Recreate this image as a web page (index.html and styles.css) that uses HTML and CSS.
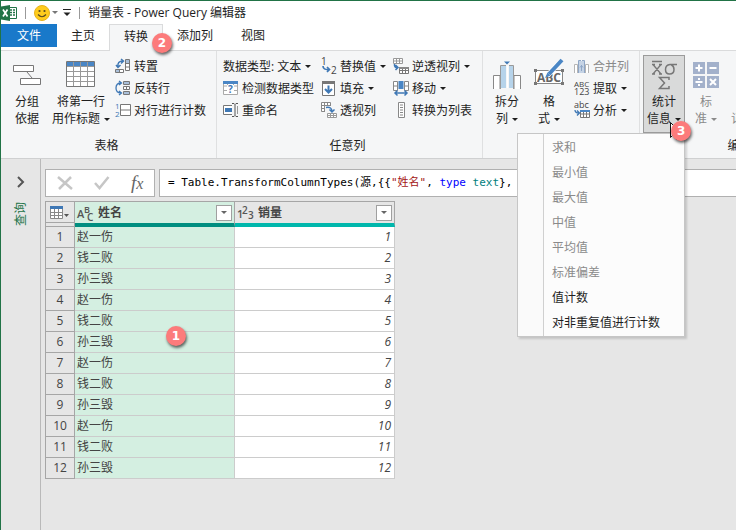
FILE: index.html
```html
<!DOCTYPE html>
<html lang="zh-CN">
<head>
    <meta charset="UTF-8">
    <meta name="viewport" content="width=device-width, initial-scale=1.0">
    <title>销量表 - Power Query 编辑器</title>
    <link rel="stylesheet" href="styles.css">
</head>
<body>
<div class="window">
    <!-- Title bar -->
    <header class="title-bar">
        <svg class="app-icon" width="16" height="16" viewBox="0 0 16 16">
            <path d="M8 2.500H15.500V13.500H8" fill="#fff" stroke="#217346"/>
            <path d="M9 5h2M12 5h2M9 7.500h2M12 7.500h2M9 10h2M12 10h2" stroke="#217346" stroke-width="1.500"/>
            <path d="M0 1.500L9 0V16L0 14.500Z" fill="#217346"/>
            <path d="M2 4.500L6.500 11.500M6.500 4.500L2 11.500" stroke="#fff" stroke-width="1.700"/>
        </svg>
        <span class="divider"></span>
        <button class="smile-button" aria-label="反馈">
            <svg width="16" height="16" viewBox="0 0 16 16">
                <circle cx="8" cy="8" r="7.500" fill="#ffcc1c" stroke="#e8b21a"/>
                <circle cx="5.500" cy="6" r="1.100" fill="#5a4a20"/>
                <circle cx="10.500" cy="6" r="1.100" fill="#5a4a20"/>
                <path d="M4 9.500Q8 14 12 9.500" fill="none" stroke="#5a4a20" stroke-width="1.200"/>
            </svg>
            <i class="arrow grey"></i>
        </button>
        <button class="customize-button" aria-label="自定义">
            <svg width="8" height="8" viewBox="0 0 8 8"><path d="M0 .5H8" stroke="#222"/><path d="M.5 3.500H7.500L4 7Z" fill="#222"/></svg>
        </button>
        <span class="divider"></span>
        <span class="title">销量表 - Power Query 编辑器</span>
    </header>

    <!-- Ribbon tabs -->
    <nav class="tabs">
        <button class="tab file">文件</button>
        <button class="tab">主页</button>
        <button class="tab active">转换<span class="badge badge-tab">2</span></button>
        <button class="tab">添加列</button>
        <button class="tab">视图</button>
    </nav>

    <!-- Ribbon -->
    <section class="ribbon">
        <div class="group">
            <div class="group-body">
                <button class="big">
                    <span class="big-icon">
                        <svg width="30" height="24" viewBox="0 0 30 24">
                            <path d="M15 9L20 15" stroke="#777"/>
                            <path d="M1.500 2.500H21.500V8.500H1.500ZM8.500 15.500H28.500V21.500H8.500Z" fill="#fff" stroke="#777"/>
                        </svg>
                    </span>
                    <span>分组<br>依据</span>
                </button>
                <button class="big">
                    <span class="big-icon">
                        <svg width="30" height="27" viewBox="0 0 30 27">
                            <path d="M.5 .5H28.500V25.500H.5Z" fill="#fff" stroke="#777"/>
                            <path d="M1 1H28V5H1Z" fill="#4a86c5"/>
                            <path d="M7.500 1V25M14.500 1V25M21.500 1V25M1 5.500H28M1 10.500H28M1 15.500H28M1 20.500H28" stroke="#999"/>
                        </svg>
                    </span>
                    <span>将第一行<br>用作标题<i class="arrow"></i></span>
                </button>
                <div class="column">
                    <button class="small">
                        <svg width="16" height="16" viewBox="0 0 16 16">
                            <path d="M.5 11.500H8.500V14.500H.5ZM10.500 1.500H14.500V12.500H10.500Z" fill="#fff" stroke="#777"/>
                            <path d="M11 2H14V5H11ZM1 12H4V14H1Z" fill="#a9bfd9"/>
                            <path d="M10.500 5.500H14.500M10.500 9H14.500M4.500 11.500V14.500" stroke="#777"/>
                            <path d="M3 9Q2 3 8 3M6 1L8.500 3L6 5.500M1 7L3 9.500L5.500 7" fill="none" stroke="#3f78b5" stroke-width="1.500"/>
                        </svg>转置
                    </button>
                    <button class="small">
                        <svg width="16" height="16" viewBox="0 0 16 16">
                            <path d="M8.500 1.500H14.500V4.500H8.500ZM8.500 6.500H14.500V9.500H8.500ZM8.500 11.500H14.500V14.500H8.500Z" fill="#fff" stroke="#777"/>
                            <path d="M9 2H14V4H9ZM9 12H14V14H9Z" fill="#a9bfd9"/>
                            <path d="M11.500 6.500V9.500" stroke="#777"/>
                            <path d="M6 3Q1 3 1 8T6 13M4 1L6.500 3L4 5M4 11L6.500 13L4 15" fill="none" stroke="#3f78b5" stroke-width="1.300"/>
                        </svg>反转行
                    </button>
                    <button class="small">
                        <svg width="16" height="16" viewBox="0 0 16 16">
                            <text class="svg-text blue" x="0" y="7" font-size="8">1</text>
                            <text class="svg-text blue" x="0" y="15" font-size="8">2</text>
                            <path d="M5.500 2.500H15.500V13.500H5.500ZM5.500 8H15.500" fill="#fff" stroke="#777"/>
                        </svg>对行进行计数
                    </button>
                </div>
            </div>
            <div class="group-label">表格</div>
        </div>

        <div class="group">
            <div class="group-body columns">
                <div class="column">
                    <button class="small">数据类型: 文本<i class="arrow"></i></button>
                    <button class="small">
                        <svg width="16" height="16" viewBox="0 0 16 16">
                            <path d="M.5 1.500H14.500V14.500H.5ZM.5 6H14.500M.5 10.500H14.500M4.500 3V14.500M10.500 3V14.500" fill="#fff" stroke="#aaa"/>
                            <path d="M0 1H15V4H0Z" fill="#4a86c5"/>
                            <path d="M4 5H11V14H4Z" fill="#fff"/>
                            <text class="svg-text blue bold" x="5" y="13" font-size="10">?</text>
                        </svg>检测数据类型
                    </button>
                    <button class="small">
                        <svg width="16" height="16" viewBox="0 0 16 16">
                            <path d="M9 3.500H.5V12.500H9" fill="#fff" stroke="#777"/>
                            <path d="M2 6H9V10H2Z" fill="#3f78b5"/>
                            <path d="M9 1.500H11L12 2.500L13 1.500H15M12 2.500V13.500M9 14.500H11L12 13.500L13 14.500H15" fill="none" stroke="#555"/>
                            <path d="M14.500 4V12" stroke="#999"/>
                        </svg>重命名
                    </button>
                </div>
                <div class="column">
                    <button class="small">
                        <svg width="16" height="16" viewBox="0 0 16 16">
                            <text class="svg-text" x="0" y="7" font-size="10">1</text>
                            <text class="svg-text" x="10" y="16" font-size="10">2</text>
                            <path d="M2 8Q2 12 8 11.500M6 9L8.500 11.500L6 14" fill="none" stroke="#3f78b5" stroke-width="1.700"/>
                        </svg>替换值<i class="arrow"></i>
                    </button>
                    <button class="small">
                        <svg width="16" height="16" viewBox="0 0 16 16">
                            <path d="M1.500 1.500H13.500V15.500H1.500Z" fill="#fff" stroke="#777"/>
                            <path d="M1 1H14V4H1Z" fill="#777"/>
                            <path d="M7.500 5.500V12.500M4 9L7.500 12.500L11 9" fill="none" stroke="#3f78b5" stroke-width="2"/>
                        </svg>填充<i class="arrow"></i>
                    </button>
                    <button class="small">
                        <svg width="16" height="16" viewBox="0 0 16 16">
                            <path d="M.5 .5H9.500V9.500H.5ZM.5 3.500H9.500M.5 6.500H9.500M3.500 .5V9.500M6.500 .5V9.500" fill="#fff" stroke="#888"/>
                            <path d="M4 4H10V10H4Z" fill="#f5f6f7"/>
                            <path d="M6.500 11.500H15.500V15.500H6.500ZM6.500 13.500H15.500M9.500 11.500V15.500M12.500 11.500V15.500" fill="#fff" stroke="#999"/>
                            <path d="M5 5.500Q11 4.500 11 9.500M8.500 7.500L11 10L13.500 7.500" fill="none" stroke="#3f78b5" stroke-width="1.500"/>
                        </svg>透视列
                    </button>
                </div>
                <div class="column">
                    <button class="small">
                        <svg width="16" height="16" viewBox="0 0 16 16">
                            <path d="M.5 .5H9.500V5.500H.5ZM.5 3H9.500M3.500 .5V5.500M6.500 .5V5.500" fill="#fff" stroke="#999"/>
                            <path d="M6.500 9.500H15.500V15.500H6.500ZM6.500 12.500H15.500M9.500 9.500V15.500M12.500 9.500V15.500" fill="#fff" stroke="#777"/>
                            <path d="M6 9H16V11H6Z" fill="#888"/>
                            <path d="M1.500 6Q1 10 5 9.500M2.500 7L5 9.500L2.500 12" fill="none" stroke="#3f78b5" stroke-width="1.500"/>
                        </svg>逆透视列<i class="arrow"></i>
                    </button>
                    <button class="small">
                        <svg width="16" height="16" viewBox="0 0 16 16">
                            <path d="M.5 1.500H4.500V10.500H.5ZM.5 6H4.500M11.500 1.500H15.500V10.500H11.500ZM11.500 6H15.500" fill="#fff" stroke="#888"/>
                            <path d="M5.500 1H10.500V9H5.500Z" fill="#4a86c5"/>
                            <path d="M2 13H14M4.500 10.500L2 13L4.500 15.500M11.500 10.500L14 13L11.500 15.500" fill="none" stroke="#3f78b5" stroke-width="1.500"/>
                        </svg>移动<i class="arrow"></i>
                    </button>
                    <button class="small">
                        <svg width="16" height="16" viewBox="0 0 16 16">
                            <path d="M5.500 .5H11.500V15.500H5.500Z" fill="#fff" stroke="#888"/>
                            <path d="M7 3H10M7 5.500H10M7 8H10M7 10.500H10M7 13H10" stroke="#888"/>
                        </svg>转换为列表
                    </button>
                </div>
            </div>
            <div class="group-label">任意列</div>
        </div>

        <div class="group tight">
            <div class="group-body">
                <button class="big">
                    <span class="big-icon">
                        <svg width="30" height="30" viewBox="0 0 30 30">
                            <path d="M1.500 29V15.500H8V29M22 29V15.500H28.500V29" fill="#fff" stroke="#888"/>
                            <path d="M9 5H14V28H9Z" fill="#b6d3ea"/><path d="M17 5H21V28H17Z" fill="#b6d3ea"/>
                            <path d="M8.500 29V5.500H14M21.500 29V5.500H17" fill="none" stroke="#999"/>
                            <path d="M12 1.500H18L15 4.500Z" fill="#3f78b5"/><path d="M15.500 6V28" stroke="#fff"/>
                        </svg>
                    </span>
                    <span>拆分<br>列<i class="arrow"></i></span>
                </button>
                <button class="big">
                    <span class="big-icon">
                        <svg width="32" height="32" viewBox="0 1 32 32">
                            <path d="M2.500 12.500H29.500V25.500H2.500Z" fill="#fff" stroke="#888"/>
                            <path d="M1 11H4V14H1ZM28 11H31V14H28ZM1 24H4V27H1ZM28 24H31V27H28Z" fill="#777"/>
                            <text class="svg-text bold" x="4" y="24" font-size="12">ABC</text>
                            <path d="M14 18L27 4" stroke="#fff" stroke-width="5"/>
                            <path d="M16 16L29 2" stroke="#4a86c5" stroke-width="4"/>
                            <path d="M12 20L14.500 14.500L17.500 17.500Z" fill="#4a86c5"/>
                        </svg>
                    </span>
                    <span>格<br>式<i class="arrow"></i></span>
                </button>
                <div class="column inset">
                    <button class="small" disabled>
                        <svg width="16" height="16" viewBox="0 0 16 16">
                            <path d="M.5 15V6.500H3.500V15M11.500 15V6.500H14.500V15" fill="#fff" stroke="#b5b5b5"/>
                            <path d="M5 3H10V15H5Z" fill="#c5d3e5"/>
                            <path d="M4.500 15V2.500H7M10.500 15V2.500H8M7.500 7V13M6 9.500L7.500 7.500L9 9.500" fill="none" stroke="#8ea6c6"/>
                        </svg>合并列
                    </button>
                    <button class="small">
                        <svg width="16" height="16" viewBox="0 0 16 16">
                            <text class="svg-text" x="0" y="7" font-size="8">ABC</text>
                            <text class="svg-text" x="0" y="15" font-size="9">123</text>
                        </svg>提取<i class="arrow"></i>
                    </button>
                    <button class="small">
                        <svg width="16" height="16" viewBox="0 0 16 16">
                            <text class="svg-text" x="0" y="6" font-size="9">abc</text>
                            <path d="M6.500 8.500H15.500V15.500H6.500ZM6.500 12H15.500M9.500 9V15.500M12.500 9V15.500" fill="#fff" stroke="#777"/>
                            <path d="M6 8H16V10H6Z" fill="#4a86c5"/>
                            <path d="M1 8Q1 11 5 11M3 8.500L5.500 11L3 13.500" fill="none" stroke="#3f78b5" stroke-width="1.300"/>
                        </svg>分析<i class="arrow"></i>
                    </button>
                </div>
            </div>
        </div>

        <div class="group tight">
            <div class="group-body">
                <div class="menu-holder">
                    <button class="big pressed" aria-expanded="true">
                        <span class="big-icon">
                            <svg width="28" height="34" viewBox="0 0 28 34">
                                <path d="M2 3.500H12M3 6.500L11 16M11 6.500L3 16M2 6.500H5M9 6.500H12M2 16H5M9 16H12" fill="none" stroke="#777" stroke-width="1.300"/>
                                <path d="M27 6.500H20Q15.500 7 15.500 11.500Q15.500 16 19.500 16Q24 16 24 11.500Q24 8 21 6.500" fill="none" stroke="#777" stroke-width="1.500"/>
                                <path d="M19 22V19.500H9.500L14.500 25L9.500 30.500H19V28" fill="none" stroke="#777" stroke-width="1.500"/>
                            </svg>
                        </span>
                        <span>统计<br>信息<i class="arrow"></i></span>
                    </button>
                    <ul class="menu">
                        <li><button disabled>求和</button></li>
                        <li><button disabled>最小值</button></li>
                        <li><button disabled>最大值</button></li>
                        <li><button disabled>中值</button></li>
                        <li><button disabled>平均值</button></li>
                        <li><button disabled>标准偏差</button></li>
                        <li><button>值计数</button></li>
                        <li><button>对非重复值进行计数</button></li>
                    </ul>
                    <svg class="pointer" width="12" height="18" viewBox="0 0 12 18">
                        <path d="M.5 .5V15.500L4 12L6.500 17.500L9 16.500L6.500 11H11Z" fill="#fff" stroke="#111"/>
                    </svg>
                    <span class="badge badge-menu">3</span>
                </div>
                <button class="big" disabled>
                    <span class="big-icon">
                        <svg width="26" height="26" viewBox="0 0 26 26">
                            <path d="M0 0H12V12H0ZM14 0H26V12H14ZM0 14H12V26H0ZM14 14H26V26H14Z" fill="#a3b1cb"/>
                            <path d="M6 2.500V9.500M2.500 6H9.500M16.500 6H23.500M2.500 20H9.500M17 17L23 23M23 17L17 23" stroke="#fff" stroke-width="2"/>
                            <path d="M5 16H7V18H5ZM5 22H7V24H5Z" fill="#fff"/>
                        </svg>
                    </span>
                    <span>标<br>准<i class="arrow"></i></span>
                </button>
                <button class="big" disabled>
                    <span class="big-icon"></span>
                    <span>科学<br>记数<i class="arrow"></i></span>
                </button>
                <div class="column">
                    <button class="small" disabled>
                        <svg width="16" height="16" viewBox="0 0 16 16"><path d="M1.500 14.500H14.500V1.500Z" fill="#fff" stroke="#a3b1cb"/></svg>三角函数<i class="arrow"></i>
                    </button>
                    <button class="small" disabled>
                        <svg width="16" height="16" viewBox="0 0 16 16"><path d="M1 8H14M10 4L14 8L10 12" fill="none" stroke="#a3b1cb"/></svg>舍入<i class="arrow"></i>
                    </button>
                    <button class="small" disabled>
                        <svg width="16" height="16" viewBox="0 0 16 16"><path d="M8 7V13M8 3V5" stroke="#a3b1cb" stroke-width="2"/></svg>信息<i class="arrow"></i>
                    </button>
                </div>
            </div>
            <div class="group-label">编号列</div>
        </div>
    </section>

    <div class="workspace">
        <!-- Collapsed query pane -->
        <aside class="query-pane">
            <button class="expand-button" aria-label="展开">
                <svg width="8" height="12" viewBox="0 0 8 12"><path d="M1 1L6 6L1 11" fill="none" stroke="#555" stroke-width="2"/></svg>
            </button>
            <span class="pane-title">查询</span>
        </aside>

        <main class="editor">
            <div class="formula-row">
                <div class="formula-buttons">
                    <button aria-label="取消"><svg width="16" height="14" viewBox="0 0 16 14"><path d="M1 1L15 13M14 1L2 13" stroke="#c6c6c6" stroke-width="2.500"/></svg></button>
                    <button aria-label="确认"><svg width="16" height="14" viewBox="0 0 16 14"><path d="M1 7L5.500 12L14.500 1" fill="none" stroke="#c6c6c6" stroke-width="2.500"/></svg></button>
                    <button class="fx">f<small>x</small></button>
                </div>
                <div class="formula" role="textbox" aria-label="公式" contenteditable="true" spellcheck="false">= Table.TransformColumnTypes(源,{{<span class="string">"姓名"</span>, <span class="keyword">type</span> <span class="type">text</span>},</div>
            </div>

            <table class="data-grid">
                <thead>
                    <tr>
                        <th class="corner">
                            <div class="head">
                                <button class="table-button" aria-label="表">
                                    <svg width="20" height="13" viewBox="0 0 20 13">
                                        <path d="M.5 .5H12.500V12.500H.5ZM.5 6.500H12.500M.5 9.500H12.500M4.500 3V12.500M8.500 3V12.500" fill="#fff" stroke="#888"/>
                                        <path d="M0 0H13V3H0Z" fill="#3f78b5"/>
                                        <path d="M14 8H19L16.500 11Z" fill="#555"/>
                                    </svg>
                                </button>
                            </div>
                        </th>
                        <th class="selected">
                            <div class="head">
                                <svg width="17" height="16" viewBox="0 0 17 16">
                                    <text class="svg-text head-text" x="0" y="13" font-size="11">A</text>
                                    <text class="svg-text head-text" x="7" y="8" font-size="9">B</text>
                                    <text class="svg-text head-text" x="10" y="16" font-size="10">C</text>
                                </svg>
                                <span>姓名</span>
                                <button class="filter" aria-label="筛选姓名"><i class="arrow"></i></button>
                            </div>
                        </th>
                        <th>
                            <div class="head">
                                <svg width="17" height="16" viewBox="0 0 17 16">
                                    <text class="svg-text head-text" x="0" y="13" font-size="11">1</text>
                                    <text class="svg-text head-text" x="5" y="9" font-size="10">2</text>
                                    <text class="svg-text head-text" x="11" y="14" font-size="10">3</text>
                                </svg>
                                <span>销量</span>
                                <button class="filter" aria-label="筛选销量"><i class="arrow"></i></button>
                            </div>
                        </th>
                    </tr>
                </thead>
                <tbody>
                    <tr><th>1</th><td class="name">赵一伤</td><td class="number">1</td></tr>
                    <tr><th>2</th><td class="name">钱二败</td><td class="number">2</td></tr>
                    <tr><th>3</th><td class="name">孙三毁</td><td class="number">3</td></tr>
                    <tr><th>4</th><td class="name">赵一伤</td><td class="number">4</td></tr>
                    <tr><th>5</th><td class="name">钱二败</td><td class="number">5</td></tr>
                    <tr><th>6</th><td class="name">孙三毁<span class="badge badge-cell">1</span></td><td class="number">6</td></tr>
                    <tr><th>7</th><td class="name">赵一伤</td><td class="number">7</td></tr>
                    <tr><th>8</th><td class="name">钱二败</td><td class="number">8</td></tr>
                    <tr><th>9</th><td class="name">孙三毁</td><td class="number">9</td></tr>
                    <tr><th>10</th><td class="name">赵一伤</td><td class="number">10</td></tr>
                    <tr><th>11</th><td class="name">钱二败</td><td class="number">11</td></tr>
                    <tr><th>12</th><td class="name">孙三毁</td><td class="number">12</td></tr>
                </tbody>
            </table>
        </main>
    </div>
</div>
</body>
</html>
```

FILE: styles.css
```css
* {
    box-sizing: border-box;
}
body {
    margin: 0;
    font-family: "Open Sans", "Noto Sans CJK SC", sans-serif;
    font-size: 12px;
    line-height: 17px;
    color: #1e1e1e;
}
button {
    margin: 0;
    padding: 0;
    border: none;
    background: none;
    font: inherit;
    color: inherit;
    white-space: nowrap;
}
button:disabled {
    color: #8a8a8a;
}
svg {
    display: block;
    flex: none;
    overflow: visible;
}
.window {
    display: flex;
    flex-direction: column;
    height: 100vh;
    overflow: hidden;
    border-top: 1px solid #217346;
    border-left: 1px solid #217346;
    background-color: #fff;
}
/* Small drop-down arrow */
.arrow {
    display: inline-block;
    margin-left: 4px;
    border: 3px solid transparent;
    border-top-color: currentColor;
    border-bottom: none;
    vertical-align: middle;
}
.arrow.grey {
    margin-left: 2px;
    color: #777;
}
/* Text inside icons */
.svg-text {
    font-family: "Open Sans", sans-serif;
    fill: #444;
}
.svg-text.bold {
    font-weight: bold;
    fill: #666;
}
.svg-text.blue {
    fill: #3f78b5;
}
.svg-text.head-text {
    font-weight: 600;
    fill: #555;
}
/* Numbered step markers */
.badge {
    position: absolute;
    z-index: 3;
    width: 20px;
    height: 20px;
    border-radius: 50%;
    background-color: #fc7b7b;
    box-shadow: 1px 2px 3px rgba(0, 0, 0, 0.6);
    color: #fff;
    font-family: "DejaVu Sans", sans-serif;
    font-weight: bold;
    line-height: 20px;
    text-align: center;
}
.badge-tab {
    right: -10px;
    top: 8px;
}
.badge-menu {
    right: -6px;
    bottom: -8px;
}
.badge-cell {
    right: 48px;
    top: -6px;
}

/* Title bar */
.title-bar {
    display: flex;
    align-items: center;
    height: 23px;
}
.divider {
    width: 1px;
    height: 12px;
    margin: 0 8px;
    background-color: #999;
}
.smile-button {
    display: flex;
    align-items: center;
}
.customize-button {
    margin-left: 5px;
}

/* Tabs */
.tabs {
    display: flex;
    align-items: flex-start;
    height: 26px;
}
.tab {
    position: relative;
    height: 23px;
    padding: 0 14px;
}
.tab.file {
    padding: 0 16px;
    background-color: #1979ca;
    color: #fff;
}
.tab.active {
    z-index: 1;
    height: 27px;
    padding: 0 14px 3px;
    border: 1px solid #dadbdc;
    border-bottom: none;
    background-color: #f5f6f7;
}

/* Ribbon */
.ribbon {
    display: flex;
    border-top: 1px solid #dadbdc;
    border-bottom: 1px solid #cfd0d1;
    background-color: #f5f6f7;
}
.group {
    display: flex;
    flex: none;
    flex-direction: column;
    padding: 4px 9px 0 5px;
    border-right: 1px solid #dfe0e1;
}
.group.tight {
    padding-left: 3px;
}
.group-body {
    display: flex;
    height: 79px;
}
.columns {
    gap: 5px;
}
.column {
    display: flex;
    flex-direction: column;
}
.column.inset {
    padding-left: 3px;
}
.group-label {
    height: 24px;
    line-height: 24px;
    text-align: center;
}
.small {
    display: flex;
    align-items: center;
    height: 22px;
    padding: 0 1px;
}
.small svg {
    margin-right: 3px;
}
.big {
    display: flex;
    flex-direction: column;
    align-items: center;
    min-width: 42px;
    height: 78px;
    padding: 0 3px;
    border: 1px solid transparent;
}
.big-icon {
    display: flex;
    align-items: center;
    height: 37px;
}
.big.pressed {
    border-color: #9b9b9b;
    background-color: #d9dada;
}
.menu-holder {
    position: relative;
    height: 78px;
}
.menu {
    position: absolute;
    z-index: 2;
    top: 100%;
    right: 0;
    width: 168px;
    margin: 0;
    padding: 1px 0;
    border: 1px solid #c6c6c6;
    background: linear-gradient(to right, #fafafa 25px, #d0d0d0 25px, #d0d0d0 26px, #fcfcfc 26px);
    box-shadow: 2px 2px 2px rgba(0, 0, 0, 0.15);
    list-style: none;
}
.menu button {
    display: block;
    width: 100%;
    height: 25px;
    padding-left: 34px;
    text-align: left;
}
.pointer {
    position: absolute;
    z-index: 3;
    right: 3px;
    bottom: -7px;
}

/* Workspace */
.workspace {
    display: flex;
    flex: 1;
    min-height: 0;
    background-color: #e6e6e6;
}
.query-pane {
    display: flex;
    flex-direction: column;
    align-items: center;
    gap: 14px;
    width: 40px;
    padding-top: 17px;
    border-right: 1px solid #b9b9b9;
}
.pane-title {
    color: #217346;
    writing-mode: sideways-lr;
}
.editor {
    flex: 1;
    min-width: 0;
    padding: 10px 0 0 4px;
}
.formula-row {
    display: flex;
    gap: 4px;
    margin-bottom: 4px;
}
.formula-buttons {
    display: flex;
    align-items: center;
    justify-content: space-around;
    width: 110px;
    height: 28px;
    border: 1px solid #b0b0b0;
    background-color: #fff;
}
.fx {
    font-family: "Liberation Serif", serif;
    font-size: 19px;
    font-style: italic;
    color: #666;
}
.fx small {
    font-size: 16px;
}
.formula {
    flex: 1;
    height: 28px;
    padding-left: 8px;
    border: 1px solid #b0b0b0;
    border-right: none;
    background-color: #fff;
    color: #000;
    font-family: "DejaVu Sans Mono", "Noto Sans CJK SC", monospace;
    font-size: 11px;
    line-height: 26px;
    white-space: pre;
    overflow: hidden;
}
.string {
    color: #a31515;
}
.keyword {
    color: #00f;
}
.type {
    color: #008080;
}

/* Data grid */
.data-grid {
    border-spacing: 0;
    border-top: 1px solid #a6a6a6;
    border-left: 1px solid #a6a6a6;
    color: #444;
}
.data-grid th,
.data-grid td {
    height: 21px;
    padding: 0;
    border-right: 1px solid #ccc;
    border-bottom: 1px solid #ccc;
    line-height: 20px;
}
.data-grid tbody th {
    border-color: #a6a6a6;
    font-weight: normal;
}
.data-grid thead th {
    width: 160px;
    border-right-color: #a6a6a6;
    border-bottom: 4px solid #00b7ac;
}
.data-grid thead th.selected {
    border-bottom-color: #008e80;
    background-color: #d4efe1;
}
.data-grid thead th.corner {
    width: 29px;
    border-bottom: 1px solid #a6a6a6;
}
.head {
    display: flex;
    align-items: center;
    gap: 4px;
    height: 21px;
    padding: 0 2px;
}
.corner .head {
    justify-content: center;
    padding: 0;
    border-bottom: 1px solid #a6a6a6;
    margin-bottom: 3px;
}
.filter {
    display: flex;
    align-items: center;
    justify-content: center;
    width: 16px;
    height: 16px;
    margin-left: auto;
    border: 1px solid #a0a0a0;
    background-color: #fff;
    color: #666;
}
.filter .arrow {
    margin: 0;
}
.data-grid .name {
    position: relative;
    padding-left: 2px;
    background-color: #d4efe1;
}
.data-grid .number {
    padding-right: 3px;
    background-color: #fff;
    font-style: italic;
    text-align: right;
}
```
